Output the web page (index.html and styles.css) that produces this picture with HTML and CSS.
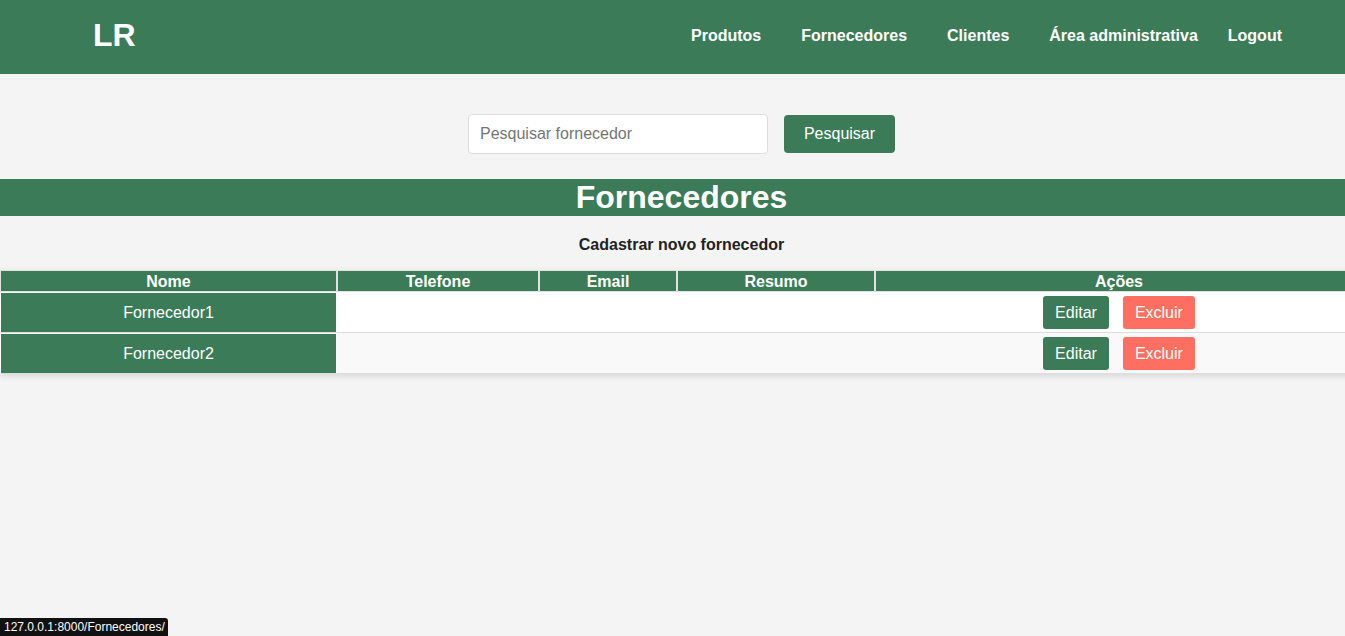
FILE: index.html
```html
<!DOCTYPE html>
<html lang="pt-BR">
<head>
<meta charset="utf-8">
<title>Fornecedores</title>
<link rel="stylesheet" href="styles.css">
</head>
<body>
<header class="topbar">
  <div class="logo">LR</div>
  <nav class="nav">
    <a href="#">Produtos</a>
    <a href="#">Fornecedores</a>
    <a href="#">Clientes</a>
    <a href="#">Área administrativa</a>
    <a href="#" class="logout">Logout</a>
  </nav>
</header>
<main class="page">
  <form class="search">
    <input type="text" placeholder="Pesquisar fornecedor">
    <button type="button">Pesquisar</button>
  </form>
  <h1 class="title">Fornecedores</h1>
  <p class="new"><a href="#">Cadastrar novo fornecedor</a></p>
  <table class="grid">
    <thead>
      <tr>
        <th class="c-nome">Nome</th>
        <th class="c-tel">Telefone</th>
        <th class="c-email">Email</th>
        <th class="c-res">Resumo</th>
        <th>Ações</th>
      </tr>
    </thead>
    <tbody>
      <tr>
        <td class="name">Fornecedor1</td>
        <td></td><td></td><td></td>
        <td class="actions"><a class="btn edit" href="#">Editar</a><a class="btn del" href="#">Excluir</a></td>
      </tr>
      <tr class="alt">
        <td class="name">Fornecedor2</td>
        <td></td><td></td><td></td>
        <td class="actions"><a class="btn edit" href="#">Editar</a><a class="btn del" href="#">Excluir</a></td>
      </tr>
    </tbody>
  </table>
</main>
<div class="status">127.0.0.1:8000/Fornecedores/</div>
</body>
</html>
```
FILE: styles.css
```css
html, body {
  margin: 0;
  padding: 0;
  overflow-x: hidden;
}
body {
  background: #f4f4f4;
  font-family: "Liberation Sans", Arial, sans-serif;
  color: #333;
  height: 636px;
  position: relative;
}
a { text-decoration: none; color: inherit; }

.topbar {
  height: 74px;
  background: #3b7b58;
  display: flex;
  align-items: center;
  justify-content: space-between;
  padding: 0 63px 2px 93px;
  box-sizing: border-box;
  color: #fff;
}
.logo {
  font-size: 32px;
  font-weight: bold;
  margin-bottom: 2px;
}
.nav {
  display: flex;
  align-items: center;
  gap: 40px;
  font-size: 16px;
  font-weight: bold;
}
.nav .logout { margin-left: -10px; }

.page {
  width: 1363px;
}
.search {
  display: flex;
  justify-content: center;
  align-items: center;
  gap: 16px;
  padding-top: 40px;
  margin: 0;
}
.search input {
  width: 300px;
  height: 40px;
  box-sizing: border-box;
  border: 1px solid #ddd;
  border-radius: 4px;
  padding: 0 11px;
  font-family: "Liberation Sans", Arial, sans-serif;
  font-size: 16px;
  background: #fff;
  color: #333;
}
.search input::placeholder { color: #757575; }
.search button {
  width: 111px;
  height: 38px;
  background: #3b7b58;
  color: #fff;
  border: none;
  border-radius: 4px;
  font-family: "Liberation Sans", Arial, sans-serif;
  font-size: 16px;
}
.title {
  margin: 25px 0 0;
  height: 37px;
  line-height: 36px;
  background: #3b7b58;
  color: #fff;
  text-align: center;
  font-size: 32px;
  font-weight: bold;
}
.new {
  margin: 0;
  padding: 20px 0 0;
  height: 34px;
  text-align: center;
  font-size: 16px;
  font-weight: bold;
  color: #222;
}

.grid {
  width: 1363px;
  border-collapse: separate;
  border-spacing: 0;
  background: #fff;
  box-shadow: 0 2px 6px rgba(0,0,0,0.12);
  font-size: 16px;
  margin-top: 0;
}
.grid th {
  background: #3b7b58;
  color: #fff;
  font-weight: bold;
  height: 20px;
  padding: 0;
  border: 1px solid #e2e2e2;
  line-height: 19px;
}
.c-nome { width: 335px; }
.c-tel { width: 200px; }
.c-email { width: 136px; }
.c-res { width: 196px; }
.grid td {
  height: 39px;
  padding: 0;
  border-bottom: 1px solid #ddd;
  text-align: center;
}
.grid tr.alt td { background: #f9f9f9; }
.grid tr.alt td.name, .grid td.name {
  background: #3b7b58;
  color: #fff;
  border: 1px solid #fff;
  border-bottom-color: #ddd;
}
.actions {
  text-align: center;
}
.btn {
  display: inline-block;
  height: 33px;
  line-height: 33px;
  padding: 0 12px;
  border-radius: 3px;
  color: #fff;
  vertical-align: middle;
}
.btn.edit { background: #3b7b58; margin-right: 14px; }
.btn.del { background: #ff6f61; }

.status {
  position: absolute;
  left: 0;
  bottom: 0;
  background: #111;
  color: #fff;
  font-family: "Liberation Sans", Arial, sans-serif;
  font-size: 12px;
  padding: 2px 3px 2px 4px;
  border-top-right-radius: 3px;
}
```
